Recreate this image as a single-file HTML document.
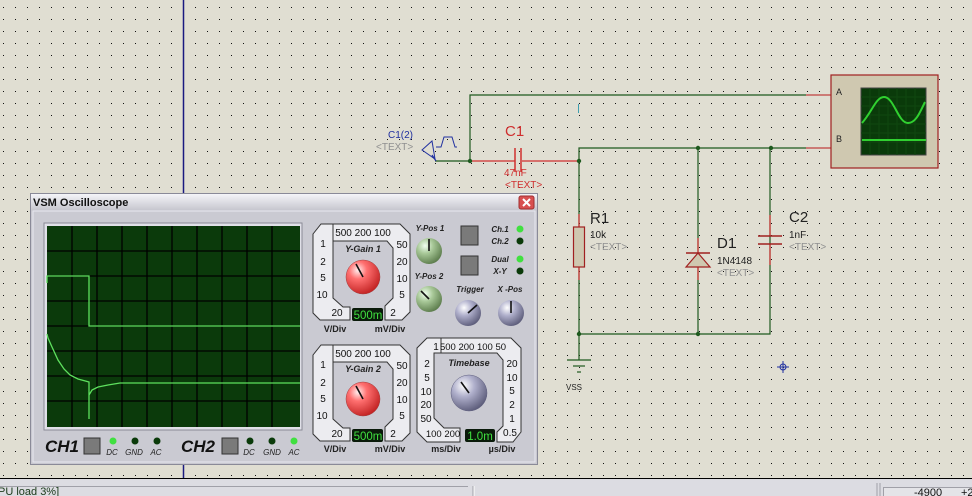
<!DOCTYPE html>
<html><head><style>
html,body{margin:0;padding:0;width:972px;height:496px;overflow:hidden;background:#e0ded2}
svg{display:block}
text{font-family:"Liberation Sans",sans-serif}
</style></head><body>
<svg width="972" height="496" viewBox="0 0 972 496" xmlns="http://www.w3.org/2000/svg">
<defs>
<pattern id="dots" x="3" y="7" width="12" height="12" patternUnits="userSpaceOnUse"><rect x="0" y="0" width="1" height="1" fill="#111"/></pattern>
<radialGradient id="red" cx="0.35" cy="0.3" r="0.75"><stop offset="0" stop-color="#fff0f0"/><stop offset="0.35" stop-color="#ff7070"/><stop offset="1" stop-color="#c02020"/></radialGradient>
<radialGradient id="grn" cx="0.35" cy="0.3" r="0.75"><stop offset="0" stop-color="#f0fff0"/><stop offset="0.4" stop-color="#a8c898"/><stop offset="1" stop-color="#5a7a4a"/></radialGradient>
<radialGradient id="blu" cx="0.35" cy="0.3" r="0.75"><stop offset="0" stop-color="#ffffff"/><stop offset="0.4" stop-color="#b0b0cc"/><stop offset="1" stop-color="#5a5a78"/></radialGradient>
<linearGradient id="title" x1="0" y1="0" x2="0" y2="1"><stop offset="0" stop-color="#f4f4f8"/><stop offset="1" stop-color="#c4c4cc"/></linearGradient>
</defs>
<rect width="972" height="496" fill="#e0ded2"/>
<rect width="972" height="478" fill="url(#dots)"/>
<line x1="183.5" y1="0" x2="183.5" y2="478" stroke="#1a1a80" stroke-width="1.5"/>

<g fill="none" stroke-width="1.2">
<polyline points="435,161 470,161 470,95 806,95" stroke="#1e5a1e"/>
<line x1="806" y1="95" x2="831" y2="95" stroke="#c04040"/>
<polyline points="806,148 579,148 579,334 770,334 770,148" stroke="#1e5a1e"/>
<line x1="806" y1="148" x2="831" y2="148" stroke="#c04040"/>
<line x1="698" y1="148" x2="698" y2="334" stroke="#1e5a1e"/>
<line x1="579" y1="334" x2="579" y2="360" stroke="#1e5a1e"/>
<line x1="567" y1="360" x2="591" y2="360" stroke="#1e5a1e"/>
<line x1="573" y1="366" x2="585" y2="366" stroke="#1e5a1e"/>
<line x1="577" y1="372" x2="581" y2="372" stroke="#1e5a1e"/>
<line x1="470" y1="161" x2="515" y2="161" stroke="#d03030"/>
<line x1="522" y1="161" x2="579" y2="161" stroke="#d03030"/>
<line x1="515" y1="148" x2="515" y2="172" stroke="#d03030" stroke-width="1.5"/>
<line x1="521" y1="148" x2="521" y2="172" stroke="#d03030" stroke-width="1.5"/>
<line x1="579" y1="214" x2="579" y2="227" stroke="#d03030"/>
<line x1="579" y1="267" x2="579" y2="280" stroke="#d03030"/>
<rect x="573.5" y="227" width="11" height="40" fill="#cfc8b0" stroke="#a02020"/>
<line x1="698" y1="238" x2="698" y2="280" stroke="#d03030"/>
<polygon points="686,267 710,267 698,253" fill="#cfc8b0" stroke="#a02020"/>
<line x1="686" y1="253" x2="710" y2="253" stroke="#a02020" stroke-width="1.5"/>
<line x1="770" y1="215" x2="770" y2="236" stroke="#d03030"/>
<line x1="770" y1="244" x2="770" y2="265" stroke="#d03030"/>
<line x1="758" y1="236" x2="782" y2="236" stroke="#a02020" stroke-width="1.5"/>
<line x1="758" y1="244" x2="782" y2="244" stroke="#a02020" stroke-width="1.5"/>
<polygon points="422,150 432,141 435,159" stroke="#2030a0" stroke-width="1"/>
<polyline points="436,147 441,147 444,137 452,137 455,147 457,147" stroke="#2030a0" stroke-width="1"/>
<line x1="432" y1="155" x2="436" y2="161" stroke="#2030a0"/>
</g>
<g fill="#1e5a1e"><circle cx="470" cy="161" r="2.2"/><circle cx="579" cy="161" r="2.2"/><circle cx="698" cy="148" r="2.2"/><circle cx="771" cy="148" r="2.2"/><circle cx="579" cy="334" r="2.2"/><circle cx="698" cy="334" r="2.2"/></g>
<line x1="578.5" y1="104" x2="578.5" y2="113" stroke="#40a0b0"/>
<text x="388" y="138" font-size="10" fill="#2030a0">C1(2)</text>
<text x="376" y="150" font-size="10" fill="#909090">&lt;TEXT&gt;</text>
<text x="505" y="136" font-size="15" fill="#d03030">C1</text>
<text x="504" y="176" font-size="10" fill="#d03030">47nF</text>
<text x="505" y="188" font-size="10" fill="#d03030">&lt;TEXT&gt;</text>
<text x="590" y="223" font-size="15" fill="#222">R1</text>
<text x="590" y="238" font-size="10" fill="#222">10k</text>
<text x="590" y="250" font-size="10" fill="#909090">&lt;TEXT&gt;</text>
<text x="717" y="248" font-size="15" fill="#222">D1</text>
<text x="717" y="264" font-size="10" fill="#222">1N4148</text>
<text x="717" y="276" font-size="10" fill="#909090">&lt;TEXT&gt;</text>
<text x="789" y="222" font-size="15" fill="#222">C2</text>
<text x="789" y="238" font-size="10" fill="#222">1nF</text>
<text x="789" y="250" font-size="10" fill="#909090">&lt;TEXT&gt;</text>
<text x="566" y="390" font-size="8" fill="#222">VSS</text>
<g stroke="#2030a0" fill="none"><circle cx="783" cy="367" r="3"/><line x1="777" y1="367" x2="789" y2="367"/><line x1="783" y1="361" x2="783" y2="373"/></g>
<rect x="831" y="75" width="107" height="93" fill="#cfc8b0" stroke="#a02020" stroke-width="1.2"/>
<rect x="861" y="88" width="65" height="67" fill="#0a3a0a" stroke="#444"/>
<g stroke="#104810" stroke-width="1">
<line x1="870" y1="88" x2="870" y2="155"/><line x1="879" y1="88" x2="879" y2="155"/><line x1="888" y1="88" x2="888" y2="155"/><line x1="897" y1="88" x2="897" y2="155"/><line x1="906" y1="88" x2="906" y2="155"/><line x1="915" y1="88" x2="915" y2="155"/>
<line x1="861" y1="97" x2="926" y2="97"/><line x1="861" y1="106" x2="926" y2="106"/><line x1="861" y1="115" x2="926" y2="115"/><line x1="861" y1="124" x2="926" y2="124"/><line x1="861" y1="133" x2="926" y2="133"/><line x1="861" y1="142" x2="926" y2="142"/>
</g>
<path d="M862,123 C872,112 876,97 884,97 C894,97 898,123 908,123 C916,123 920,112 925,102" stroke="#30d030" stroke-width="2" fill="none"/>
<line x1="862" y1="140" x2="926" y2="140" stroke="#30d030" stroke-width="2"/>
<text x="836" y="95" font-size="9" fill="#222">A</text>
<text x="836" y="142" font-size="9" fill="#222">B</text>

<rect x="30.5" y="193.5" width="507" height="271" fill="#c8c8d0" stroke="#8a8a98"/>
<rect x="31" y="194" width="506" height="17" fill="url(#title)"/>
<text x="33" y="206" font-size="11" font-weight="bold" fill="#111">VSM Oscilloscope</text>
<rect x="519" y="196" width="15" height="13" rx="2" fill="#d85050" stroke="#a03030"/>
<path d="M523,199 L530,206 M530,199 L523,206" stroke="#fff" stroke-width="2"/>
<rect x="33" y="211" width="502" height="251" fill="#cacad2" stroke="#e8e8f0"/>
<rect x="44" y="223" width="258" height="207" fill="#e0e0e8" stroke="#8a8a96"/>
<rect x="47" y="226" width="253" height="201" fill="#0b3a0b"/>
<g stroke="#000" stroke-width="1.3">
<line x1="72" y1="226" x2="72" y2="427"/><line x1="97" y1="226" x2="97" y2="427"/><line x1="122" y1="226" x2="122" y2="427"/><line x1="147" y1="226" x2="147" y2="427"/><line x1="172" y1="226" x2="172" y2="427"/><line x1="197" y1="226" x2="197" y2="427"/><line x1="222" y1="226" x2="222" y2="427"/><line x1="247" y1="226" x2="247" y2="427"/><line x1="272" y1="226" x2="272" y2="427"/>
<line x1="47" y1="251" x2="300" y2="251"/><line x1="47" y1="276" x2="300" y2="276"/><line x1="47" y1="301" x2="300" y2="301"/><line x1="47" y1="326" x2="300" y2="326"/><line x1="47" y1="351" x2="300" y2="351"/><line x1="47" y1="376" x2="300" y2="376"/><line x1="47" y1="401" x2="300" y2="401"/>
</g>
<g fill="none" stroke="#5ee05e" stroke-width="1.3">
<polyline points="47,283 47,276 89,276 89,326 300,326"/>
<polyline points="47,334 48,338 52,347 58,360 64,369 70,375 78,379 89,382 89,419 89,395 92,390 98,387 108,385 120,383 300,383"/>
</g>
<g font-style="italic" font-weight="bold" fill="#111">
<text x="45" y="452" font-size="17">CH1</text>
<text x="181" y="452" font-size="17">CH2</text>
</g>
<rect x="84" y="438" width="16" height="16" fill="#7a7a7a" stroke="#333"/>
<rect x="222" y="438" width="16" height="16" fill="#7a7a7a" stroke="#333"/>
<circle cx="113" cy="441" r="3.5" fill="#40e040"/><circle cx="135" cy="441" r="3.5" fill="#0a3a0a"/><circle cx="157" cy="441" r="3.5" fill="#0a3a0a"/>
<circle cx="250" cy="441" r="3.5" fill="#0a3a0a"/><circle cx="272" cy="441" r="3.5" fill="#0a3a0a"/><circle cx="294" cy="441" r="3.5" fill="#40e040"/>
<g font-size="8" font-style="italic" fill="#222" text-anchor="middle">
<text x="112" y="455">DC</text><text x="134" y="455">GND</text><text x="156" y="455">AC</text>
<text x="249" y="455">DC</text><text x="272" y="455">GND</text><text x="294" y="455">AC</text>
</g>

<g id="yg1">
<path d="M313,234 L321,224 L400,224 L410,234 L410,312 L402,320 L385,320 L385,306 L393,298 L393,248 L387,241 L333,241 L333,298 L343,307 L350,307 L350,320 L320,320 L313,313 Z" fill="#ececf0" stroke="#333"/>
<line x1="333" y1="224" x2="333" y2="241" stroke="#333"/>
</g>
<use href="#yg1" transform="translate(0,121)"/>
<g font-size="10" fill="#111" text-anchor="middle">
<text x="363" y="236">500 200 100</text>
<text x="323" y="247">1</text><text x="323" y="265">2</text><text x="323" y="281">5</text><text x="322" y="298">10</text><text x="337" y="316">20</text>
<text x="402" y="248">50</text><text x="402" y="265">20</text><text x="402" y="282">10</text><text x="402" y="298">5</text><text x="393" y="316">2</text>
<text x="363" y="357">500 200 100</text>
<text x="323" y="368">1</text><text x="323" y="386">2</text><text x="323" y="402">5</text><text x="322" y="419">10</text><text x="337" y="437">20</text>
<text x="402" y="369">50</text><text x="402" y="386">20</text><text x="402" y="403">10</text><text x="402" y="419">5</text><text x="393" y="437">2</text>
</g>
<g font-size="9" font-weight="bold" fill="#222" text-anchor="middle">
<text x="335" y="332">V/Div</text><text x="390" y="332">mV/Div</text>
<text x="335" y="452">V/Div</text><text x="390" y="452">mV/Div</text>
<text x="446" y="452">ms/Div</text><text x="502" y="452">µs/Div</text>
</g>
<g font-size="9" font-weight="bold" font-style="italic" fill="#222" text-anchor="middle">
<text x="363" y="252">Y-Gain 1</text><text x="363" y="372">Y-Gain 2</text><text x="469" y="366">Timebase</text>
</g>
<circle cx="363" cy="277" r="17" fill="url(#red)" stroke="#a04040" stroke-width="0.5"/>
<line x1="363" y1="277" x2="356" y2="264" stroke="#111" stroke-width="1.6"/>
<circle cx="363" cy="399" r="17" fill="url(#red)" stroke="#a04040" stroke-width="0.5"/>
<line x1="363" y1="399" x2="356" y2="386" stroke="#111" stroke-width="1.6"/>
<rect x="352" y="308" width="31" height="13" rx="2" fill="#0a1a0a"/>
<text x="368" y="319" font-size="11.5" fill="#40e040" text-anchor="middle">500m</text>
<rect x="352" y="429" width="31" height="13" rx="2" fill="#0a1a0a"/>
<text x="368" y="440" font-size="11.5" fill="#40e040" text-anchor="middle">500m</text>

<path d="M417,348 L427,338 L511,338 L521,348 L521,432 L513,442 L497,442 L497,432 L503,426 L503,360 L497,353 L434,353 L434,418 L444,428 L460,428 L460,442 L427,442 L417,432 Z" fill="#ececf0" stroke="#333"/>
<line x1="441" y1="338" x2="441" y2="353" stroke="#333"/>
<g font-size="10" fill="#111" text-anchor="middle">
<text x="436" y="350">1</text>
<text x="473" y="350" font-size="9.5">500 200 100 50</text>
<text x="427" y="367">2</text><text x="427" y="381">5</text><text x="426" y="395">10</text><text x="426" y="408">20</text><text x="426" y="422">50</text>
<text x="443" y="437" font-size="9.5">100 200</text>
<text x="512" y="367">20</text><text x="512" y="381">10</text><text x="512" y="394">5</text><text x="512" y="408">2</text><text x="512" y="422">1</text><text x="510" y="436">0.5</text>
</g>
<circle cx="469" cy="393" r="18" fill="url(#blu)" stroke="#606080" stroke-width="0.5"/>
<line x1="469" y1="393" x2="461" y2="382" stroke="#111" stroke-width="1.6"/>
<rect x="465" y="429" width="30" height="13" rx="2" fill="#0a1a0a"/>
<text x="480" y="440" font-size="11.5" fill="#40e040" text-anchor="middle">1.0m</text>

<g font-size="8" font-style="italic" font-weight="bold" fill="#222" text-anchor="middle">
<text x="430" y="231">Y-Pos 1</text><text x="429" y="279">Y-Pos 2</text>
<text x="470" y="292">Trigger</text><text x="510" y="292">X -Pos</text>
<text x="500" y="232">Ch.1</text><text x="500" y="244">Ch.2</text>
<text x="500" y="262">Dual</text><text x="500" y="274">X-Y</text>
</g>
<circle cx="429" cy="251" r="13" fill="url(#grn)"/><line x1="429" y1="251" x2="429" y2="239" stroke="#111" stroke-width="1.6"/>
<circle cx="429" cy="299" r="13" fill="url(#grn)"/><line x1="429" y1="299" x2="421" y2="291" stroke="#111" stroke-width="1.6"/>
<circle cx="468" cy="313" r="13" fill="url(#blu)"/><line x1="468" y1="313" x2="477" y2="305" stroke="#111" stroke-width="1.6"/>
<circle cx="511" cy="313" r="13" fill="url(#blu)"/><line x1="511" y1="313" x2="511" y2="301" stroke="#111" stroke-width="1.6"/>
<rect x="461" y="226" width="17" height="19" fill="#7a7a7a" stroke="#333"/>
<rect x="461" y="256" width="17" height="19" fill="#7a7a7a" stroke="#333"/>
<circle cx="520" cy="229" r="3.5" fill="#40e040"/><circle cx="520" cy="241" r="3.5" fill="#0a3a0a"/>
<circle cx="520" cy="259" r="3.5" fill="#40e040"/><circle cx="520" cy="271" r="3.5" fill="#0a3a0a"/>

<rect x="0" y="478" width="972" height="18" fill="#dcdce2"/>
<line x1="0" y1="478.5" x2="972" y2="478.5" stroke="#000"/>
<line x1="0" y1="486.5" x2="468" y2="486.5" stroke="#a0a0a8"/>
<line x1="473" y1="486" x2="473" y2="496" stroke="#a0a0a8"/>
<line x1="474" y1="486" x2="474" y2="496" stroke="#fff"/>
<line x1="877" y1="483" x2="877" y2="496" stroke="#a0a0a8"/>
<line x1="880" y1="483" x2="880" y2="496" stroke="#a0a0a8"/>
<rect x="883.5" y="487.5" width="90" height="10" fill="#e4e4e8" stroke="#a0a0a8"/>
<text x="-2" y="495" font-size="11" fill="#1a3a1a">PU load 3%]</text>
<text x="914" y="496" font-size="11" fill="#111">-4900</text>
<text x="961" y="496" font-size="11" fill="#111">+2</text>
</svg>
</body></html>
